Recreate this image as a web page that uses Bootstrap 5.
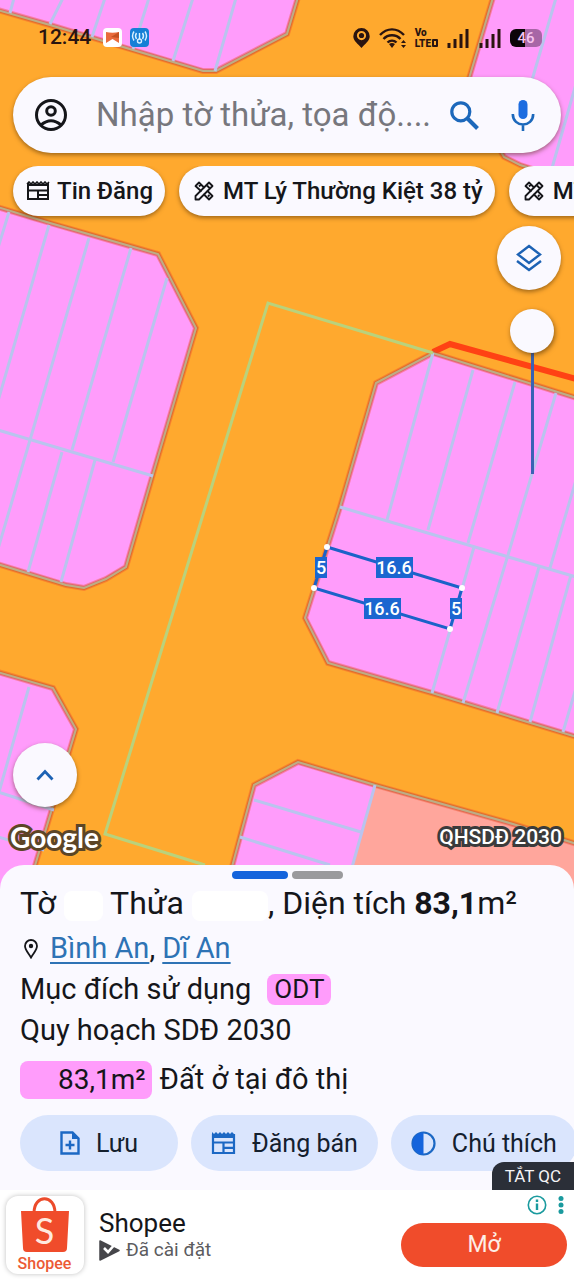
<!DOCTYPE html>
<html lang="vi">
<head>
<meta charset="utf-8">
<meta name="viewport" content="width=device-width, initial-scale=1">
<title>Bản đồ quy hoạch</title>
<link href="https://cdn.jsdelivr.net/npm/bootstrap@5.3.0/dist/css/bootstrap.min.css" rel="stylesheet">
<style>
  :root { --paper: #faf9ff; --ink: #15161a; --blue: #1c66b8; --plot: #ff9cfb; }
  body { font-family: Roboto, "Noto Sans", sans-serif; color: var(--ink); background: #fff; overflow-x: hidden; }
  svg { display: block; flex-shrink: 0; }
  .map-view { background: #ffa92e; z-index: 0; }
  .map-canvas { position: absolute; inset: 0 0 -24px; width: 100%; height: calc(100% + 24px); z-index: -1; }
  .status-bar { height: 77px; padding: 0 32px 2px 38px; font-size: 21px; font-weight: 500; color: #2a1410; }
  .status-left { gap: 8px; }
  .status-right { gap: 9px; }
  .volte { font-size: 10px; line-height: 11px; font-weight: 900; }
  .lte-slot { display: inline-block; width: 6px; height: 8px; border: 2px solid; border-radius: 1px; margin-left: 1px; }
  .battery { width: 32px; height: 18px; border-radius: 6px; font-size: 15px; line-height: 18px; color: #f6c3ee; background: linear-gradient(90deg, #0c0508 48%, #a766a6 48%); }
  .floaty { background: var(--paper); box-shadow: 0 2px 4px rgba(70, 40, 0, .5); border: 0; }
  .search-box { height: 76px; margin: 0 13px 13px; padding: 0 26px 0 21px; border-radius: 38px; }
  .search-box input { font-size: 33px; line-height: 40px; color: var(--ink); min-width: 0; padding: 0; margin-left: 28px; }
  .search-box input::placeholder { color: #77777d; opacity: 1; }
  .mic { margin-left: 32px; }
  .plain-btn { border: 0; background: none; padding: 0; color: inherit; }
  .chip-row { gap: 14px; padding: 0 13px 10px; overflow: hidden; }
  .chip { height: 50px; border-radius: 25px; padding: 0 12px 0 13px; gap: 7px; font-size: 24px; font-weight: 500; color: var(--ink); white-space: nowrap; flex-shrink: 0; }
  .chip svg { width: 24px; }
  .map-tools { padding-right: 13px; }
  .map-foot { padding: 0 12px 10px 10px; }
  .fab { width: 64px; height: 64px; color: var(--blue); }
  .map-foot .fab { margin: 0 0 8px 3px; }
  .zoom-range { writing-mode: vertical-lr; appearance: none; -webkit-appearance: none; width: 44px; height: 165px; margin: 19px 7px 0 0; background: linear-gradient(#3a62b4, #3a62b4) center 22px / 3px 100% no-repeat; }
  .zoom-range::-webkit-slider-thumb { -webkit-appearance: none; width: 44px; height: 44px; border-radius: 50%; background: var(--paper); box-shadow: 1px 2px 5px rgba(70, 40, 0, .6); }
  .outlined { color: #fff; paint-order: stroke fill; }
  .google-mark { font-family: Lato, sans-serif; font-weight: 700; font-size: 28px; line-height: 36px; -webkit-text-stroke: 6px #5c4526; }
  .layer-name { font-size: 21px; font-weight: 500; line-height: 34px; -webkit-text-stroke: 6px #3b3b3b; }
  .plan-sheet { background: var(--paper); border-radius: 24px 24px 0 0; z-index: 1; padding: 6px 20px 19px; font-size: 29px; line-height: 41px; }
  .pager { gap: 4px; height: 8px; }
  .pager span { width: 51px; border-radius: 4px; background: #9a9a9d; }
  .pager .current { width: 56px; background: #1464dc; }
  .plot-title { font-size: 32px; white-space: nowrap; }
  .blank { display: inline-block; width: 39px; height: 30px; background: #fff; border-radius: 8px; vertical-align: middle; }
  .blank-wide { width: 76px; }
  .plan-sheet a { color: #2e73b5; text-underline-offset: 4px; text-decoration-thickness: 2px; }
  .land-tag { background: var(--plot); border-radius: 8px; }
  .land-code { font-size: 26px; line-height: 31px; padding: 0 7px; margin-left: 16px; }
  .land-area { font-size: 28px; line-height: 38px; padding: 0 6px 0 38px; }
  .actions { gap: 13px; margin-top: 15px; margin-right: -20px; overflow: hidden; }
  .act { height: 56px; border-radius: 28px; background: #dae5fd; border: 0; font-size: 25px; color: #14202e; gap: 16px; padding: 0 20px; min-width: 158px; flex-shrink: 0; white-space: nowrap; }
  .ad-bar { background: #fff; height: 90px; z-index: 2; padding: 0 7px 0 6px; gap: 15px; }
  .ad-close { position: absolute; right: 0; bottom: 100%; height: 28px; padding: 0 13px; border: 0; border-radius: 12px 0 0 0; background: #2b2f38; color: #f4f4f6; font-size: 17px; line-height: 28px; }
  .ad-logo { width: 78px; height: 78px; border-radius: 12px; box-shadow: 0 0 5px rgba(0, 0, 0, .25); }
  .ad-name { font-size: 26px; line-height: 30px; }
  .ad-state { font-size: 19px; line-height: 24px; color: #5c5c60; gap: 6px; }
  .ad-open { width: 166px; height: 44px; border-radius: 22px; border: 0; background: #f04c2b; color: #fdeee6; font-size: 23px; }
</style>
</head>
<body>
<div class="d-flex flex-column min-vh-100">
  <main class="map-view position-relative flex-grow-1 d-flex flex-column">
    <svg class="map-canvas" viewBox="0 0 574 889" preserveAspectRatio="xMidYMin slice" role="img" aria-label="Bản đồ thửa đất">
      <defs>
        <g id="blocks">
          <path d="M-6-6V9L50 25 133 50 203 71 216 71 287 34 299-6"/>
          <path d="M494-6 465 92 504 157 520 165 580 184V-6"/>
          <path d="M-6 206 50 223 130 246 158 254 196 328 153 474 126 567 106 579 84 588 66 585-6 563"/>
          <path d="M580 399 433 353 376 383 340 507 305 618 328 663 432 693 580 738"/>
          <path d="M-6 889V671L53 688 76 729 28 889"/>
          <path d="M226 889 254 785 298 762 375 785 513 824 580 845V889"/>
        </g>
      </defs>
      <use href="#blocks" fill="#ff9cfb"/>
      <path d="M375 785 580 845V889H346Z" fill="#ffa69c"/>
      <path d="M433 352 450 344 580 380" fill="none" stroke="#ff4214" stroke-width="6"/>
      <use href="#blocks" fill="none" stroke="#f0502c" stroke-width="6" stroke-opacity=".4"/>
      <use href="#blocks" fill="none" stroke="#c8552e" stroke-width="4" stroke-opacity=".5"/>
      <use href="#blocks" fill="none" stroke="#bcae86" stroke-width="2"/>
      <g fill="none" stroke="#b9c4ee" stroke-width="3">
        <path d="M14-2 10 13M63-2 50 24M105-2 92 37M149-2 133 49M193-2 173 61M236-2 215 71M556-2 525 104M576 84 552 168"/>
        <path d="M9 212-2 248M49 225-2 401M89 238 30 440-2 549M131 248 72 450M167 278 113 462M-2 430 153 476M62 452 28 572M95 460 61 582"/>
        <path d="M433 353 387 520M473 370 428 530M515 382 468 543M556 393 508 555M576 480 550 568M340 507 576 577M474 547 432 693M508 555 463 703M539 567 497 713M571 575 530 722M576 688 563 732"/>
        <path d="M29 687-1 792M-2 792 54 810M-2 837 44 850M375 785 346 889M254 800 361 832M240 837 330 865"/>
      </g>
      <path d="M433 353 268 303 105 834 205 865" fill="none" stroke="#b9d27c" stroke-width="3"/>
      <path d="M327 547 462 588 450 629 314 588Z" fill="none" stroke="#1b62c8" stroke-width="3"/>
      <g fill="#1b66d0"><path d="M376 557h37v21h-37zM364 598h37v21h-37zM315 557h12v21h-12zM450 598h12v21h-12z"/></g>
      <g fill="#fff"><circle cx="327" cy="547" r="3"/><circle cx="462" cy="588" r="3"/><circle cx="450" cy="629" r="3"/><circle cx="314" cy="588" r="3"/></g>
      <g fill="#fff" font-size="18" font-weight="500" text-anchor="middle">
        <text x="394" y="574">16.6</text><text x="382" y="615">16.6</text><text x="321" y="574">5</text><text x="456" y="615">5</text>
      </g>
    </svg>

    <header class="status-bar d-flex align-items-center justify-content-between">
      <div class="status-left d-flex align-items-center">
        <span class="me-1">12:44</span>
        <svg width="19" height="19" viewBox="0 0 19 19"><rect width="19" height="19" rx="4" fill="#fff"/><path d="M3 4c4 1 9 1 13 0v11l-6.500-4L3 15Z" fill="#e96b3c"/><path d="m8 9 8-5v6Z" fill="#c5501f"/></svg>
        <svg width="19" height="19" viewBox="0 0 19 19"><rect width="19" height="19" rx="4" fill="#167fd6"/><g fill="none" stroke="#d9f0ff" stroke-width="1.400"><path d="M6.500 5Q4.500 8 6.500 11M4 3.500Q1 8 4 12.500M12.500 5q2 3 0 6M15 3.500q3 4.500 0 9M9.500 5v6"/><circle cx="9.500" cy="13" r="2"/></g></svg>
      </div>
      <div class="status-right d-flex align-items-center">
        <svg width="17" height="20" viewBox="0 0 17 20" fill="#2a1410"><path fill-rule="evenodd" d="M8.500 0A8.200 8.200 0 0 0 .3 8.300C.3 13 5 16 8.500 20 12 16 16.700 13 16.700 8.300A8.200 8.200 0 0 0 8.500 0Zm0 3a4.600 4.600 0 1 1 0 9.200 4.600 4.600 0 0 1 0-9.200Z"/><circle cx="8.500" cy="7.500" r="2.600"/></svg>
        <svg width="27" height="20" viewBox="0 0 27 20" fill="none" stroke="#2a1410" stroke-width="2.400"><path d="M1 7C8-.5 18-.5 25 7M4.500 11C9 6 17 6 21.500 11M8.500 14.500c2.500-2.500 6.500-2.500 9 0"/><path d="m10 16 3 4 3-4q-3-2-6 0ZM22 15l2.500-3 2.500 3ZM22 17l2.500 3 2.500-3Z" fill="#2a1410" stroke="none"/></svg>
        <span class="volte">Vo<br>LTE<i class="lte-slot"></i></span>
        <svg width="54" height="20" viewBox="0 0 54 20" stroke="#2a1410" stroke-width="3"><path d="M2 20v-5M8 20V11M14 20V6M20 20V1M34 20v-5M40 20V11M46 20V6M52 20V1"/></svg>
        <span class="battery text-center">46</span>
      </div>
    </header>

    <form class="search-box floaty d-flex align-items-center" role="search" onsubmit="return false">
      <button class="plain-btn" type="button" aria-label="Tài khoản">
        <svg width="34" height="34" viewBox="0 0 34 34" fill="none" stroke="#15161a" stroke-width="3"><circle cx="17" cy="17" r="14.500"/><circle cx="17" cy="13" r="4.300"/><path d="M7 27q10-8.500 20 0"/></svg>
      </button>
      <input id="q" class="form-control border-0 bg-transparent shadow-none flex-grow-1" type="text" placeholder="Nhập tờ thửa, tọa độ...." aria-label="Tìm kiếm">
      <button class="plain-btn ms-3" type="submit" aria-label="Tìm">
        <svg width="29" height="29" viewBox="0 0 29 29" fill="none" stroke="#1c68bb" stroke-width="3.200"><circle cx="10.800" cy="10.800" r="9"/><path d="m17.500 17.500 10 10" stroke-width="4"/></svg>
      </button>
      <button class="plain-btn mic" type="button" aria-label="Giọng nói">
        <svg width="24" height="31" viewBox="0 0 24 31" fill="none" stroke="#1c68bb" stroke-width="2.600"><rect x="7.500" y="0" width="9" height="19" rx="4.500" fill="#1c6ce0" stroke="none"/><path d="M1.800 14c0 14 20.400 14 20.400 0M12 24.500V31"/></svg>
      </button>
    </form>

    <nav class="chip-row d-flex" aria-label="Lối tắt">
      <button class="chip floaty d-flex align-items-center" type="button">
        <svg height="20" viewBox="0 0 24 20" fill="none" stroke="#15161a" stroke-width="2"><path d="M2 2v16h20V2M2 4h20M2 9.500h20M12 10v8M12 14h10"/><path d="M1 3l2-2 2 2 2-2 2 2 2-2 2 2 2-2 2 2 2-2 2 2 2-2" stroke-width="1.600"/></svg>
        Tin Đăng
      </button>
      <button class="chip floaty d-flex align-items-center" type="button">
        <svg height="20" viewBox="-2 0 24 20" fill="none" stroke="#15161a" stroke-width="1.800" stroke-linejoin="round"><g id="tools"><path d="M7.500 10.500 1.500 5 5 1.500l5.500 5.500M13 9.500l5.500 5.500-3.500 3.500-5.500-5.500M5 5.500 6.500 4M14 15.500l1.500-1.500"/><path d="M1.500 18.500v-3.500L15 1.500 18.500 5 5 18.500ZM12.500 4 16 7.500"/></g></svg>
        MT Lý Thường Kiệt 38 tỷ
      </button>
      <button class="chip floaty d-flex align-items-center" type="button">
        <svg height="20" viewBox="-2 0 24 20" fill="none" stroke="#15161a" stroke-width="1.800" stroke-linejoin="round"><use href="#tools"/></svg>
        MT
      </button>
    </nav>

    <div class="map-tools d-flex flex-column align-items-end">
      <button class="fab floaty rounded-circle d-flex align-items-center justify-content-center" type="button" aria-label="Lớp bản đồ">
        <svg width="26" height="28" viewBox="0 0 26 28" fill="none" stroke="#1c62b4" stroke-width="2.400"><path d="m13 2 11 8.500L13 19 2 10.500ZM1 17l12 9 12-9"/></svg>
      </button>
      <input class="zoom-range" type="range" min="0" max="100" value="0" aria-label="Độ trong suốt">
    </div>

    <div class="map-foot mt-auto d-flex flex-column">
      <button class="fab floaty rounded-circle d-flex align-items-center justify-content-center" type="button" aria-label="Mở rộng">
        <svg width="18" height="12" viewBox="0 0 18 12" fill="none" stroke="#1c62b4" stroke-width="2.800"><path d="m1.500 10.500 7.500-8 7.500 8"/></svg>
      </button>
      <div class="d-flex justify-content-between align-items-center mt-1">
        <span class="outlined google-mark">Google</span>
        <span class="outlined layer-name">QHSDĐ 2030</span>
      </div>
    </div>
  </main>

  <section class="plan-sheet position-relative">
    <div class="pager d-flex justify-content-center"><span class="current"></span><span></span></div>
    <div class="plot-title pt-1">Tờ <span class="blank"></span> Thửa <span class="blank blank-wide"></span>, Diện tích <b class="fw-bold">83,1</b>m²</div>
    <div class="d-flex align-items-center pt-1">
      <svg class="ms-1 me-2" width="14" height="20" viewBox="0 0 14 20" fill="none" stroke="#15161a" stroke-width="1.800"><path d="M7 1a6 6 0 0 0-6 6c0 4 3.500 7 6 11.500C9.500 14 13 11 13 7a6 6 0 0 0-6-6Z"/><circle cx="7" cy="7" r="2.200" fill="#15161a" stroke="none"/></svg>
      <span class="ms-1"><a href="#binh-an">Bình An</a>, <a href="#di-an">Dĩ An</a></span>
    </div>
    <div class="d-flex align-items-center">Mục đích sử dụng <span class="land-tag land-code">ODT</span></div>
    <div>Quy hoạch SDĐ 2030</div>
    <div class="d-flex align-items-center pt-2 gap-2"><span class="land-tag land-area">83,1m²</span> Đất ở tại đô thị</div>
    <div class="actions d-flex">
      <button class="act d-flex align-items-center justify-content-center" type="button">
        <svg width="20" height="24" viewBox="0 0 20 24" fill="none" stroke="#1c68c4" stroke-width="2.400"><path d="M1.500 1.500h11l6 6v15h-17ZM10 9.500v9M5.500 14h9"/><path d="M12 1v7h7Z" fill="#1c68c4" stroke="none"/></svg>
        Lưu
      </button>
      <button class="act d-flex align-items-center justify-content-center" type="button">
        <svg width="25" height="23" viewBox="0 0 25 23" fill="none" stroke="#1c68c4" stroke-width="2.200"><path d="M2 2v19h21V2M2 10.500h21M12.500 11v10M12.500 15.800H23"/><path d="M1 0l2 2 2-2 2 2 2-2 2 2 2-2 2 2 2-2 2 2 2-2 2 2v4H1Z" fill="#1c68c4" stroke="none"/></svg>
        Đăng bán
      </button>
      <button class="act d-flex align-items-center justify-content-center" type="button">
        <svg width="25" height="25" viewBox="0 0 25 25"><circle cx="12.500" cy="12.500" r="11" fill="none" stroke="#1c68c4" stroke-width="2.200"/><path d="M12.500 1.500a11 11 0 0 0 0 22Z" fill="#1464dc"/></svg>
        Chú thích
      </button>
    </div>
  </section>

  <footer class="ad-bar position-relative d-flex align-items-center">
    <button class="ad-close" type="button">TẮT QC</button>
    <div class="ad-logo bg-white">
      <svg width="78" height="78" viewBox="0 0 78 78"><path d="M28 17C28-2 49-2 49 17" fill="none" stroke="#ec4b2b" stroke-width="3"/><path d="M15 15h48l-2 37q0 4-4 4H21q-4 0-4-4Z" fill="#f04c2b"/><text x="38.500" y="48" font-family="Lato, sans-serif" font-size="36" fill="#ffe9df" text-anchor="middle">S</text><text x="38.500" y="73" font-family="Roboto, sans-serif" font-size="16" font-weight="500" fill="#ec5a35" text-anchor="middle">Shopee</text></svg>
    </div>
    <div>
      <div class="ad-name">Shopee</div>
      <div class="ad-state d-flex align-items-center">
        <svg width="21" height="21" viewBox="0 0 21 21"><path d="M1 1 20 10.500 1 20Z" fill="#46464a" stroke="#46464a" stroke-width="1.500" stroke-linejoin="round"/><path d="m5 8 4 4 8-9" fill="none" stroke="#fff" stroke-width="2.600"/></svg>
        Đã cài đặt
      </div>
    </div>
    <div class="ms-auto d-flex flex-column align-items-end pb-2">
      <div class="d-flex align-items-center gap-2 mb-2">
        <svg width="20" height="20" viewBox="0 0 20 20" fill="none" stroke="#1a9a9e" stroke-width="1.600"><circle cx="10" cy="10" r="8.700"/><path d="M10 8.500V15M10 4.500V7" stroke-width="2.400"/></svg>
        <svg width="12" height="20" viewBox="0 0 12 20" fill="#1a9a9e"><circle cx="6" cy="3.500" r="2.500"/><circle cx="6" cy="10" r="2.500"/><circle cx="6" cy="16.500" r="2.500"/></svg>
      </div>
      <button class="ad-open" type="button">Mở</button>
    </div>
  </footer>
</div>
<script src="https://cdn.jsdelivr.net/npm/bootstrap@5.3.0/dist/js/bootstrap.bundle.min.js"></script>
</body>
</html>
